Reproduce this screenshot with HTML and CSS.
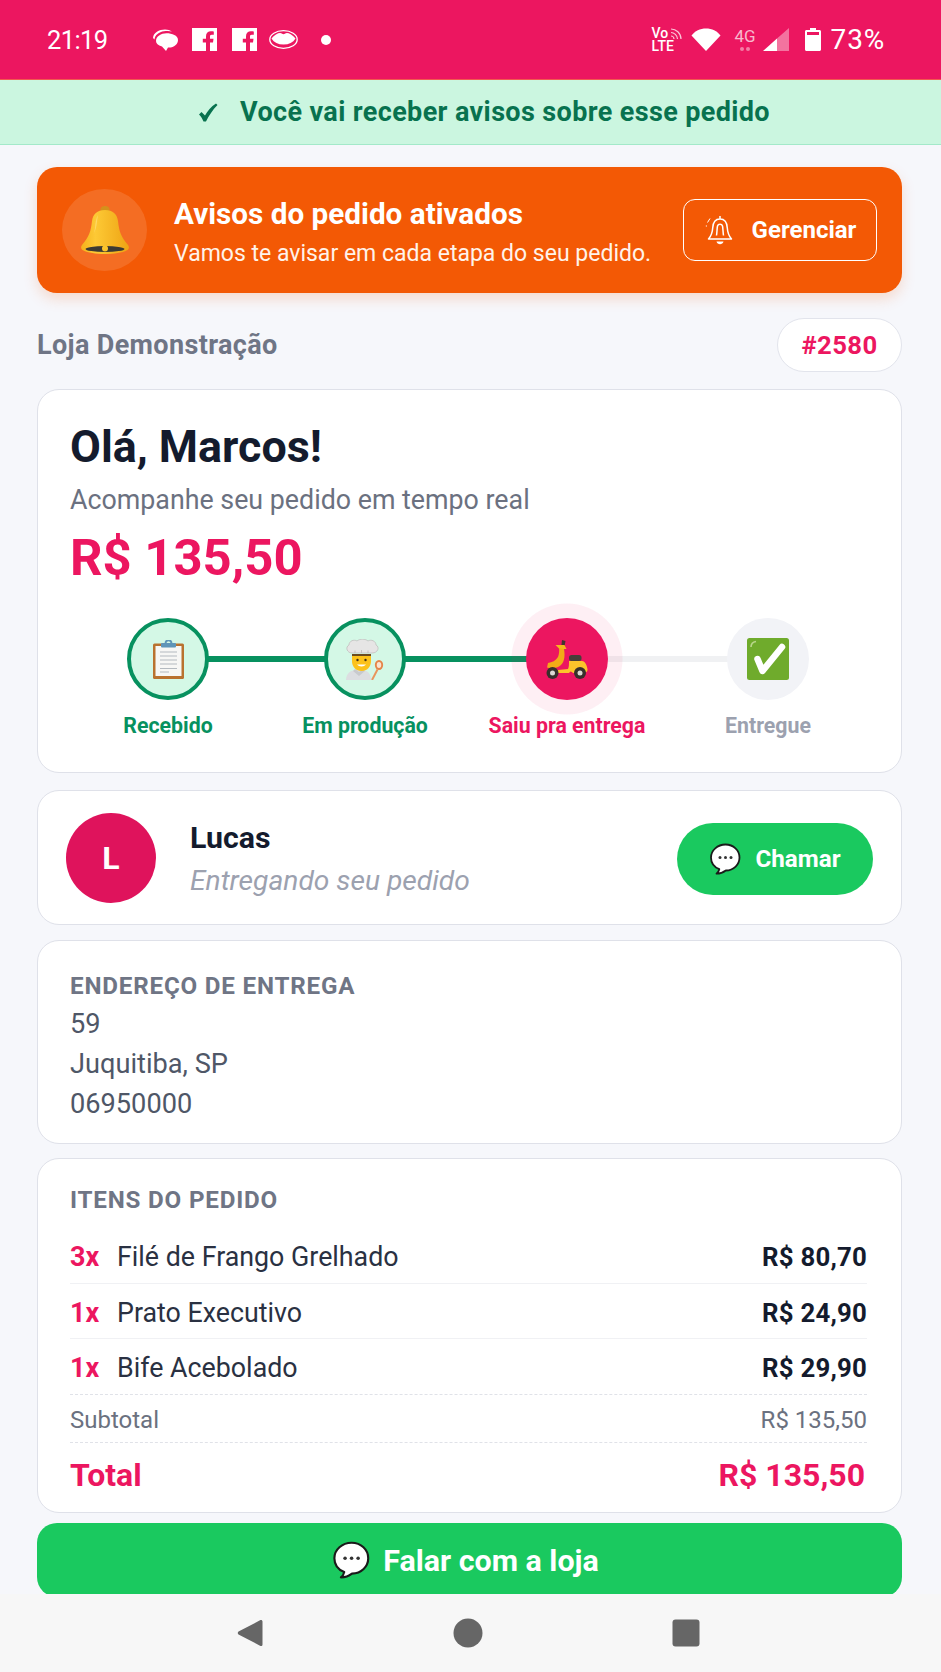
FILE: index.html
```html
<!DOCTYPE html>
<html lang="pt-BR">
<head>
<meta charset="utf-8">
<title>Pedido #2580</title>
<link rel="stylesheet" href="styles.css">
</head>
<body>
<svg class="defs" width="0" height="0" aria-hidden="true">
  <defs>
    <symbol id="bubble" viewBox="0 0 32 32">
      <path d="M16.500 1.500C8.500 1.500 2 7.300 2 14.500c0 5.300 3.400 9.700 8.300 11.700-.4 1.800-1.300 3.300-2.800 4.500 3.700 0 6.900-1.300 9.300-3.200 8-.2 13.700-6 13.700-13 0-7.200-6-13-14-13Z" fill="#fff" stroke="#1a1a1a" stroke-width="1.800" stroke-linejoin="round"/>
      <circle cx="11" cy="14.500" r="1.500" fill="#333"/><circle cx="16.500" cy="14.500" r="1.500" fill="#333"/><circle cx="22" cy="14.500" r="1.500" fill="#333"/>
    </symbol>
    <symbol id="fb" viewBox="0 0 25 23">
      <path fill="#fff" fill-rule="evenodd" d="M0 0h25v23H0zM18 23v-8.500h3l.5-3.800H18V8.600c0-1.100.3-1.800 1.800-1.800h2V3.500c-.4 0-1.500-.2-2.800-.2-3 0-5 1.800-5 5v2.400h-3.200v3.800H14V23z"/>
    </symbol>
  </defs>
</svg>

<header class="status">
  <span class="clock">21:19</span>
  <div class="notif-icons">
    <svg class="i-msg" viewBox="0 0 25 22"><path fill="#fff" d="M3 12C3 7.500 8 4.300 13.500 4.300S25 6.500 25 11c0 4.500-4.500 8-10 7.500L13 22l-4-4.500C5 16.300 3 14.500 3 12Z"/><path fill="#fff" d="M0 9C.5 3.500 6 .5 12 .5c3 0 5 .7 7 2-2-.5-5-.7-8-.2C6 3 2 6 1.500 10.500Z"/></svg>
    <svg class="i-fb"><use href="#fb"/></svg>
    <svg class="i-fb"><use href="#fb"/></svg>
    <svg class="i-lips" viewBox="0 0 29 19"><ellipse cx="14.500" cy="9.500" rx="13.700" ry="8.800" fill="none" stroke="#fff" stroke-width="1.300"/><path fill="#fff" d="M2.500 8.500C5 5 9 3 11 3c2 0 2.500 1.300 3.500 1.300S16 3 18 3c2 0 6 2 8.500 5.500C24 12.500 20 14.500 14.500 14.500S5 12.500 2.500 8.500Z"/></svg>
    <span class="dot"></span>
  </div>
  <div class="sys-icons">
    <div class="volte"><span>Vo</span><span>LTE</span>
      <svg class="volte-waves" viewBox="0 0 12 12"><path d="M1 1c5 0 10 4 10 10M1 4.500c3 0 6.500 3 6.500 6.500M1 8c1.500 0 3 1.500 3 3" fill="none" stroke="#fff" stroke-opacity=".75" stroke-width="1.200"/></svg>
    </div>
    <svg class="i-wifi" viewBox="0 0 30 23"><path fill="#fff" d="M15 23 .5 7.500C4 3 9 .5 15 .5S26 3 29.500 7.500Z"/></svg>
    <div class="net"><span>4G</span><span class="net-dots"><i></i><i></i></span></div>
    <svg class="i-signal" viewBox="0 0 26 23"><path fill="#fff" fill-opacity=".4" d="M26 0v23H14V10.500Z"/><path fill="#fff" d="M14 10.500V23H0Z"/></svg>
    <svg class="i-batt" viewBox="0 0 16 23"><path fill="#fff" d="M5 0h6v2h3.500c.8 0 1.500.7 1.500 1.500v18c0 .8-.7 1.500-1.500 1.500h-13C.7 23 0 22.300 0 21.500v-18C0 2.700.7 2 1.500 2H5Z"/><path fill="#ec1660" d="M2 4h12v3H2z"/></svg>
    <span class="batt-text">73%</span>
  </div>
</header>

<div class="notice">
  <svg class="notice-check" viewBox="0 0 20 19"><path fill="#08724f" d="M1 11.500 3.500 9 7 12.500C9.500 8 13 3.500 18 .5l1.500 1.500C14.500 7 11 12.500 8 18.500h-2.500C4.500 16 3 13.500 1 11.500Z"/></svg>
  <span>Você vai receber avisos sobre esse pedido</span>
</div>

<main class="content">
  <section class="alert">
    <div class="alert-icon">
      <svg viewBox="0 0 48 48" class="bell-big">
        <defs><linearGradient id="g1" x1="0" x2="1"><stop offset="0" stop-color="#f5b21c"/><stop offset=".3" stop-color="#fdc935"/><stop offset="1" stop-color="#eea414"/></linearGradient></defs>
        <ellipse cx="24" cy="3.500" rx="4.500" ry="3.500" fill="#d4901c"/>
        <path fill="url(#g1)" d="M24 4C32 4 36 8 37 15c1 10 3 16 10 24 1.500 2 1.200 4-1 5.200-5 2.600-13 3.800-22 3.800S7 46.800 2 44.200C-.2 43-.5 41 1 39 8 31 10 25 11 15 12 8 16 4 24 4Z"/>
        <path fill="#ffe07a" fill-opacity=".7" d="M17 9c-2 3-2.500 8-3 13-.3 3-1 5-2 7 2.500-4 3.500-9 4-13 .3-3 .7-5 1-7Z"/>
        <ellipse cx="24" cy="43" rx="19.500" ry="3" fill="#3c3a33"/>
        <circle cx="24" cy="42.500" r="3" fill="#fbc52c"/>
      </svg>
    </div>
    <div class="alert-text">
      <strong>Avisos do pedido ativados</strong>
      <span>Vamos te avisar em cada etapa do seu pedido.</span>
    </div>
    <button class="manage">
      <svg viewBox="0 0 28 31" class="bell-line"><path fill="none" stroke="#fff" stroke-width="1.500" stroke-linejoin="round" d="M15 4c5 0 7 3.500 7.300 9 .3 4.500 1.500 8 4.200 11H3.500c2.700-3 3.900-6.500 4.200-11C8 7.500 10 4 15 4ZM15 1v3M11.500 20.500c.5-3 .5-7 1-9.500.7-2.500 4.300-2.500 5 0 .5 2.500.5 6.500 1 9.500"/><path fill="#fff" d="M11.500 26.500h7c-.8 3.500-6.200 3.500-7 0Z"/><path d="M5 3.500 2.500 7.500M.8 11h1.200" stroke="#fff" stroke-width="1" fill="none"/></svg>
      <span>Gerenciar</span>
    </button>
  </section>

  <div class="meta">
    <span class="store">Loja Demonstração</span>
    <span class="order-no">#2580</span>
  </div>

  <section class="card hero">
    <h1>Olá, Marcos!</h1>
    <p class="sub">Acompanhe seu pedido em tempo real</p>
    <div class="price">R$ 135,50</div>
    <ol class="steps">
      <li class="step done">
        <span class="bar"></span>
        <span class="circle">
          <svg viewBox="0 0 31 39" class="emoji-clip"><rect y="3.500" width="31" height="35.500" rx="1.500" fill="#b9722f"/><rect x="2.500" y="6" width="26" height="30" fill="#f7f7f5"/><path d="M7 12h17M7 16h17M7 20h17M7 24h17M7 28.500h17M7 32h9" stroke="#b4bac0" stroke-width="1.100"/><rect x="8" y="3" width="15" height="4.500" rx="1" fill="#5f95b8"/><path d="M12.500 4c0-5 6-5 6 0" fill="none" stroke="#5f95b8" stroke-width="2"/></svg>
        </span>
        <span class="label">Recebido</span>
      </li>
      <li class="step done">
        <span class="bar"></span>
        <span class="circle">
          <svg viewBox="0 0 38 41" class="emoji-chef"><path d="M0 41c0-6 4-10 11-10h4c7 0 10 4 10 10z" fill="#dcdee1"/><path d="M9 30l4 3 4-3 2 2-6 5-6-5z" fill="#c8cacd"/><path d="M6 15h19v7c0 6-4 10-9.500 10S6 28 6 22z" fill="#fcc21b"/><path d="M6 15h19v2H6z" fill="#6b4a1f"/><circle cx="11.500" cy="21" r="1.200" fill="#40301a"/><circle cx="19.500" cy="21" r="1.200" fill="#40301a"/><path d="M11 25.500c2 2.500 7 2.500 9 0z" fill="#fff"/><path d="M6 14C1 14-1 8 3 6c0-4 5-6 8-4 3-2.500 8-2.500 11 0 3-2 8 0 8 4 4 2 2 8-4 8z" fill="#e6e5e5" stroke="#bdb9b9" stroke-width=".7"/><path d="M9 11.500V14M15.500 11v3M22 11.500V14" stroke="#bdb9b9" stroke-width=".8"/><ellipse cx="33" cy="26" rx="3.200" ry="4" fill="#fbe3d0" stroke="#e5854a" stroke-width="1.900"/><path d="M31.500 30.500 26 41" stroke="#e8965d" stroke-width="2"/></svg>
        </span>
        <span class="label">Em produção</span>
      </li>
      <li class="step active">
        <span class="bar"></span>
        <span class="circle">
          <svg viewBox="0 0 42 39" class="emoji-scooter"><path d="M16 0l3.500 1-1.500 8-3 0z" fill="#43352f"/><path d="M9.500 5h9l2 4h-7z" fill="#f6b81c"/><path d="M13 8l5 1c1.500 8 0 15-5 17.500-3 1.500-8 2.500-12 1l1-4.500c4-.5 8-2.500 10-6 1-2.500 1.500-6 1-9z" fill="#f2ab17"/><path d="M23 21h13c3 0 5.500 5 5.500 9 0 2-2 3-5 3H27c-1.500-2-3-2-4 0H12v-3l10-1c1-2 1-5 1-8z" fill="#fcc42b"/><rect x="23" y="15" width="12.500" height="6" rx="2.500" fill="#453f39"/><circle cx="6.500" cy="33" r="6" fill="#37302b"/><circle cx="6.500" cy="33" r="2.500" fill="#dcd8d3"/><circle cx="34" cy="33" r="6" fill="#37302b"/><circle cx="34" cy="33" r="2.500" fill="#dcd8d3"/></svg>
        </span>
        <span class="label">Saiu pra entrega</span>
      </li>
      <li class="step todo">
        <span class="circle">
          <svg viewBox="0 0 42 42" class="emoji-check"><rect width="42" height="42" rx="2.500" fill="#6fab2c"/><path d="M4 9c0-3 2-5 5-5.500" stroke="#b9d78c" stroke-width="1.600" fill="none"/><path d="M10.500 21 15.500 33 35 9" fill="none" stroke="#fff" stroke-width="6.500" stroke-linecap="round" stroke-linejoin="round"/></svg>
        </span>
        <span class="label">Entregue</span>
      </li>
    </ol>
  </section>

  <section class="card driver">
    <div class="avatar">L</div>
    <div class="driver-info">
      <strong>Lucas</strong>
      <em>Entregando seu pedido</em>
    </div>
    <button class="call"><svg class="bubble-sm"><use href="#bubble"/></svg><span>Chamar</span></button>
  </section>

  <section class="card address">
    <h2>ENDEREÇO DE ENTREGA</h2>
    <p>59</p>
    <p>Juquitiba, SP</p>
    <p>06950000</p>
  </section>

  <section class="card items">
    <h2>ITENS DO PEDIDO</h2>
    <ul class="item-list">
      <li><b>3x</b><span class="name">Filé de Frango Grelhado</span><span class="val">R$ 80,70</span></li>
      <li><b>1x</b><span class="name">Prato Executivo</span><span class="val">R$ 24,90</span></li>
      <li><b>1x</b><span class="name">Bife Acebolado</span><span class="val">R$ 29,90</span></li>
    </ul>
    <div class="subtotal"><span>Subtotal</span><span>R$ 135,50</span></div>
    <div class="total"><span>Total</span><span>R$ 135,50</span></div>
  </section>

  <button class="store-btn"><svg class="bubble-lg"><use href="#bubble"/></svg><span>Falar com a loja</span></button>
</main>

<nav class="navbar">
  <svg viewBox="0 0 30 30" class="nav-i"><path fill="#666" d="M27.500 3.500v23c0 1.500-1.500 2-2.500 1.200L3.500 16.500c-1-.7-1-2.300 0-3L25 2.300c1-.8 2.500-.3 2.500 1.200Z"/></svg>
  <svg viewBox="0 0 30 30" class="nav-i"><circle cx="15" cy="15" r="14.500" fill="#666"/></svg>
  <svg viewBox="0 0 30 30" class="nav-i"><rect x="1.500" y="1.500" width="27" height="27" rx="3" fill="#666"/></svg>
</nav>
</body>
</html>
```

FILE: styles.css
```css
* { box-sizing: border-box; }
html, body { margin: 0; height: 100%; }
body {
  font-family: Roboto, "Liberation Sans", sans-serif;
  background: #f6f7fb;
  color: #141b2d;
  display: flex;
  flex-direction: column;
  height: 1672px;
  overflow: hidden;
}
.defs { display: block; height: 0; }
h1, h2, p, ul, ol { margin: 0; padding: 0; list-style: none; }
button { font-family: inherit; cursor: pointer; }

/* status bar */
.status {
  height: 80px;
  flex: none;
  background: #ec1660;
  color: #fff;
  display: flex;
  align-items: center;
  padding: 0 56px 0 47px;
  border-bottom: 1px solid #f2594f;
}
.clock { font-size: 25.500px; letter-spacing: -.6px; width: 106px; }
.notif-icons { display: flex; align-items: center; }
.i-msg { width: 25px; height: 22px; margin-right: 14px; }
.i-fb { width: 25px; height: 23px; margin-right: 15px; }
.i-fb + .i-fb { margin-right: 12px; }
.i-lips { width: 29px; height: 19px; margin-top: -1px; margin-right: 23px; }
.dot { width: 10px; height: 10px; border-radius: 50%; background: #fff; }
.sys-icons { margin-left: auto; display: flex; align-items: center; }
.volte { position: relative; width: 30px; display: flex; flex-direction: column; font-size: 14px; line-height: 13px; font-weight: 500; margin-right: 9px; }
.volte-waves { position: absolute; left: 18px; top: 1px; width: 12px; height: 12px; }
.i-wifi { width: 30px; height: 23px; margin-right: 13px; }
.net { display: flex; flex-direction: column; align-items: center; font-size: 17px; line-height: 17px; color: #f8b9ce; width: 23px; margin-right: 6px; }
.net-dots { display: flex; gap: 2px; margin-top: 2px; }
.net-dots i { width: 4px; height: 4px; background: #f47ea5; border-radius: 50%; }
.i-signal { width: 26px; height: 23px; margin-right: 16px; }
.i-batt { width: 16px; height: 23px; margin-right: 10px; }
.batt-text { font-size: 28px; font-weight: 400; letter-spacing: .8px; }

/* green notice */
.notice {
  flex: none;
  height: 65px;
  background: #cbf6e0;
  border-bottom: 1px solid #a3e9c9;
  display: flex;
  align-items: center;
  justify-content: center;
  gap: 22px;
  color: #08724f;
  font-weight: 700;
  font-size: 27px;
  letter-spacing: .37px;
  padding-left: 27px;
}
.notice-check { width: 20px; height: 19px; flex: none; }

/* page */
.content {
  flex: 1;
  min-height: 0;
  overflow: hidden;
  padding: 22px 39px 0 37px;
  display: flex;
  flex-direction: column;
}

.alert {
  flex: none;
  height: 126px;
  background: #f35905;
  border-radius: 20px;
  box-shadow: 0 6px 14px rgba(246, 90, 5, .18);
  display: flex;
  align-items: center;
  padding: 0 25px;
  color: #fff;
  margin-bottom: 25px;
}
.alert-icon {
  width: 85px;
  height: 82px;
  flex: none;
  border-radius: 50%;
  background: rgba(255, 255, 255, .12);
  display: flex;
  align-items: center;
  justify-content: center;
}
.bell-big { width: 48px; height: 48px; }
.alert-text { flex: 1; margin: 4px 0 0 27px; display: flex; flex-direction: column; }
.alert-text strong { font-size: 29.700px; font-weight: 700; line-height: 34px; }
.alert-text span { font-size: 23px; line-height: 28px; margin-top: 9px; color: #fff3ea; white-space: nowrap; }
.manage {
  flex: none;
  width: 194px;
  height: 62px;
  background: transparent;
  border: 1.500px solid #fff;
  border-radius: 12px;
  color: #fff;
  font-size: 24px;
  font-weight: 700;
  display: flex;
  align-items: center;
  justify-content: center;
  gap: 19px;
  padding: 0 0 0 1px;
}
.bell-line { width: 28px; height: 31px; }

.meta { flex: none; display: flex; justify-content: space-between; align-items: center; height: 54px; margin-bottom: 17px; }
.store { font-size: 27px; font-weight: 700; color: #6f7585; letter-spacing: .35px; }
.order-no {
  width: 125px;
  height: 54px;
  border: 1px solid #e2e4ec;
  border-radius: 27px;
  background: #fff;
  color: #ec1660;
  font-size: 25.700px;
  font-weight: 700;
  display: flex;
  align-items: center;
  justify-content: center;
  letter-spacing: .4px;
}

.card {
  flex: none;
  background: #fff;
  border: 1px solid #dfe1e9;
  border-radius: 22px;
}

/* hero */
.hero { height: 384px; padding: 31px 32px 0; margin-bottom: 17px; }
.hero h1 { font-size: 44.800px; line-height: 52px; font-weight: 700; color: #141b2d; }
.sub { font-size: 26.800px; line-height: 32px; color: #6b7180; margin-top: 11px; }
.price { font-size: 50.800px; line-height: 60px; font-weight: 700; color: #ec1660; margin-top: 12px; }
.steps { display: grid; grid-template-columns: 197px 202px 201px 1fr; margin: 30px 0 0 39px; }
.step { position: relative; display: flex; flex-direction: column; align-items: flex-start; }
.circle {
  position: relative;
  width: 82px;
  height: 82px;
  border-radius: 50%;
  margin-left: 18px;
  display: flex;
  align-items: center;
  justify-content: center;
  z-index: 1;
}
.bar { position: absolute; left: 60px; width: 200px; top: 38px; height: 6px; background: #07915f; }
.done .circle { background: #d4f8e6; border: 4px solid #07915f; }
.active .circle { background: #ec1660; box-shadow: 0 0 0 14.500px rgba(238, 23, 98, .07); }
.active .bar { background: #f0f1f3; }
.todo .circle { background: #f2f3f7; }
.label { font-size: 21.300px; font-weight: 700; line-height: 26px; margin-top: 13px; white-space: nowrap; }
.done .label { color: #07915f; }
.active .label { color: #ec1660; }
.todo .label { color: #9ca1af; }
.step .label { text-align: center; width: 118px; display: flex; justify-content: center; }
.emoji-clip { width: 31px; height: 39px; }
.emoji-chef { width: 38px; height: 41px; }
.emoji-scooter { width: 42px; height: 39px; }
.emoji-check { width: 42px; height: 42px; }

/* driver */
.driver { height: 135px; display: flex; align-items: center; padding: 0 28px; margin-bottom: 15px; }
.avatar {
  width: 90px;
  height: 90px;
  flex: none;
  border-radius: 50%;
  background: #df135c;
  color: #fff;
  font-size: 32px;
  font-weight: 700;
  display: flex;
  align-items: center;
  justify-content: center;
}
.driver-info { flex: 1; margin: 4px 0 0 34px; display: flex; flex-direction: column; }
.driver-info strong { font-size: 30.300px; line-height: 34px; font-weight: 700; }
.driver-info em { font-size: 28.200px; line-height: 34px; color: #9ca1af; margin-top: 9px; }
.call {
  flex: none;
  width: 196px;
  height: 72px;
  margin-top: 3px;
  border: 0;
  border-radius: 36px;
  background: #1ac95f;
  color: #fff;
  font-size: 24.200px;
  font-weight: 700;
  display: flex;
  align-items: center;
  justify-content: center;
  gap: 14px;
  padding: 0;
}
.bubble-sm { width: 32px; height: 32px; }
.bubble-lg { width: 38px; height: 38px; }

/* address */
.address { height: 204px; padding: 31px 32px 0; margin-bottom: 14px; }
.card h2 { font-size: 24.200px; line-height: 28px; font-weight: 700; color: #6f7585; letter-spacing: .8px; }
.address p { font-size: 27.200px; line-height: 40px; color: #4f5767; }
.address h2 { margin-bottom: 4px; }

/* items */
.items { height: 355px; padding: 27px 34px 0 32px; margin-bottom: 10px; }
.item-list { margin-top: 14px; }
.item-list li { display: flex; align-items: center; height: 55.500px; padding-top: 4px; border-bottom: 1px solid #f0f1f4; font-size: 26.800px; color: #2a3142; }
.item-list li:last-child { border-bottom: 1px dashed #e0e2e8; }
.item-list b { color: #ec1660; font-weight: 700; width: 47px; font-size: 27px; }
.name { flex: 1; }
.val { font-weight: 700; color: #141b2d; font-size: 25.800px; letter-spacing: .2px; }
.subtotal { display: flex; justify-content: space-between; align-items: center; height: 48px; padding-top: 4px; border-bottom: 1px dashed #e0e2e8; font-size: 24px; color: #6b7180; }
.total { display: flex; justify-content: space-between; align-items: center; height: 63px; padding: 2px 2px 0 0; color: #ec1660; font-size: 32px; font-weight: 700; }

.store-btn {
  flex: none;
  height: 74px;
  border: 0;
  border-radius: 20px;
  background: #1ac95f;
  color: #fff;
  font-size: 30.400px;
  font-weight: 700;
  display: flex;
  align-items: center;
  justify-content: center;
  gap: 13px;
  padding: 0 8px 0 0;
}

/* nav */
.navbar {
  flex: none;
  height: 78px;
  background: #f7f7f7;
  display: flex;
  align-items: center;
  gap: 188px;
  padding-left: 235px;
}
.nav-i { width: 30px; height: 30px; }
```
